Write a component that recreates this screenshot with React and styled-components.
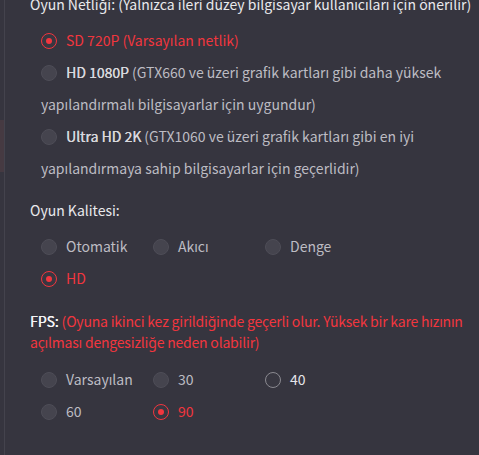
import React from 'react'
import styled, { createGlobalStyle } from 'styled-components'

const GlobalStyle = createGlobalStyle`
  html, body {
    margin: 0;
    padding: 0;
    background: #36353f;
    overflow: hidden;
  }
  body {
    font-family: "Noto Sans CJK SC", "Noto Sans", sans-serif;
  }
`

const Page = styled.div`
  display: flex;
  height: 455px;
  overflow: hidden;
  background: #36353f;
`

const Gutter = styled.div`
  width: 4px;
  flex: none;
  border-right: 1px solid #44434d;
`

const GutterMark = styled.div`
  margin-top: 120px;
  height: 52px;
  background: #463a42;
`

const Content = styled.div`
  flex: 1;
  padding: 0 4px 0 25px;
  margin-top: -6px;
  font-size: 14px;
  color: #bdbcc3;
`

const Section = styled.section`
  & + & {
    margin-top: 16px;
  }
  &:last-child {
    margin-top: 17px;
  }
`

const Title = styled.div`
  line-height: 21px;
  color: #e9e9ec;
  white-space: ${p => (p.$nowrap ? 'nowrap' : 'normal')};
`

const Strong = styled.span`
  color: #f4f4f6;
  text-shadow: 0.3px 0 0 #f4f4f6;
`

const Warn = styled.span`
  color: #f2363e;
  letter-spacing: -0.2px;
`

const Options = styled.div`
  margin-top: ${p => p.$gap || 9}px;
  padding-left: 11px;
  display: ${p => (p.$grid ? 'grid' : 'block')};
  grid-template-columns: repeat(3, 112px);
`

const Option = styled.label`
  display: block;
  line-height: 32px;
  color: ${p => (p.$checked ? '#f2363e' : '#bdbcc3')};
  white-space: ${p => (p.$grid ? 'nowrap' : 'normal')};
  cursor: pointer;
`

const Radio = styled.span`
  display: inline-block;
  box-sizing: border-box;
  width: 16px;
  height: 16px;
  margin-right: 9px;
  border-radius: 50%;
  vertical-align: -3px;
  position: relative;
  background: ${p => (p.$checked || p.$hover ? '#383741' : '#45444e')};
  border: 1px solid ${p => (p.$checked ? '#f2363e' : p.$hover ? '#8a8990' : '#4e4d57')};

  &::after {
    content: '';
    display: ${p => (p.$checked ? 'block' : 'none')};
    position: absolute;
    left: 4px;
    top: 4px;
    width: 6px;
    height: 6px;
    border-radius: 50%;
    background: #f2363e;
  }
`

const Label = styled.span`
  color: ${p => (p.$hover ? '#e4e4e8' : 'inherit')};
`

const Lead = styled.span`
  color: #d8d8dc;
  text-shadow: 0.3px 0 0 #d8d8dc;
`

const qualityOpts = [
  { lead: 'SD 720P', rest: ' (Varsayılan netlik)', checked: true },
  { lead: 'HD 1080P', rest: ' (GTX660 ve üzeri grafik kartları gibi daha yüksek yapılandırmalı bilgisayarlar için uygundur)' },
  { lead: 'Ultra HD 2K', rest: ' (GTX1060 ve üzeri grafik kartları gibi en iyi yapılandırmaya sahip bilgisayarlar için geçerlidir)' },
]

const levelOpts = [
  { label: 'Otomatik' },
  { label: 'Akıcı' },
  { label: 'Denge' },
  { label: 'HD', checked: true },
]

const fpsOpts = [
  { label: 'Varsayılan' },
  { label: '30' },
  { label: '40', hover: true },
  { label: '60' },
  { label: '90', checked: true },
]

const GridOptions = ({ items, gap }) => (
  <Options $grid $gap={gap}>
    {items.map(o => (
      <Option key={o.label} $grid $checked={o.checked}>
        <Radio $checked={o.checked} $hover={o.hover} />
        <Label $hover={o.hover}>{o.label}</Label>
      </Option>
    ))}
  </Options>
)

export default function App() {
  return (
    <>
      <GlobalStyle />
      <Page>
        <Gutter>
          <GutterMark />
        </Gutter>
        <Content>
          <Section>
            <Title $nowrap>Oyun Netliği: (Yalnızca ileri düzey bilgisayar kullanıcıları için önerilir)</Title>
            <Options>
              {qualityOpts.map(o => (
                <Option key={o.lead} $checked={o.checked}>
                  <Radio $checked={o.checked} />
                  {o.checked ? (
                    <span>{o.lead}{o.rest}</span>
                  ) : (
                    <span><Lead>{o.lead}</Lead>{o.rest}</span>
                  )}
                </Option>
              ))}
            </Options>
          </Section>

          <Section>
            <Title>Oyun Kalitesi:</Title>
            <GridOptions items={levelOpts} />
          </Section>

          <Section>
            <Title $nowrap>
              <Strong>FPS:</Strong>
              <Warn> (Oyuna ikinci kez girildiğinde geçerli olur. Yüksek bir kare hızının<br />açılması dengesizliğe neden olabilir)</Warn>
            </Title>
            <GridOptions items={fpsOpts} gap={10} />
          </Section>
        </Content>
      </Page>
    </>
  )
}
